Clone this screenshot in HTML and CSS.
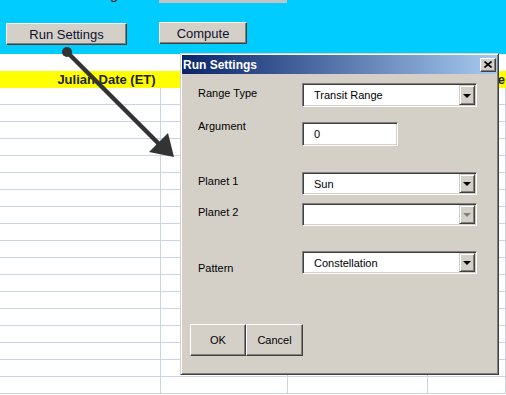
FILE: index.html
```html
<!DOCTYPE html>
<html lang="en">
<head>
  <meta charset="UTF-8">
  <meta name="viewport" content="width=device-width, initial-scale=1.0">
  <title>Run Settings</title>
  <link rel="stylesheet" href="styles.css">
</head>
<body>
  <div class="page">
    <div class="toolbar">
      <div class="top-row">
        <span class="top-label">Time Setting</span>
        <span class="top-field"></span>
      </div>
      <div class="button-row">
        <button class="btn btn-run">Run Settings</button>
        <button class="btn btn-compute">Compute</button>
      </div>
    </div>

    <div class="sheet">
      <div class="header-row">
        <div class="head-cell head-main">Julian Date (ET)</div>
        <div class="head-cell head-side">Longitude</div>
      </div>
      <div id="rows"></div>
    </div>

    <!-- pointer from the button to the dialog -->
    <svg class="pointer" width="506" height="395" viewBox="0 0 506 395">
      <circle cx="67" cy="52" r="5" fill="#333"/>
      <line x1="67" y1="52" x2="161" y2="146" stroke="#333" stroke-width="4.5"/>
      <polygon points="174,157 149,152 168,133" fill="#333"/>
    </svg>

    <div class="dialog">
      <div class="title-bar">
        <span class="title-text">Run Settings</span>
        <span class="close-btn">
          <svg width="8" height="7" viewBox="0 0 8 7">
            <path d="M0.5 0.5 L7.5 6.5 M7.5 0.5 L0.5 6.5" stroke="#000" stroke-width="1.6"/>
          </svg>
        </span>
      </div>
      <div class="dialog-body">
        <div class="field-row row-range">
          <span class="field-label">Range Type</span>
          <div class="combo">
            <span class="combo-text">Transit Range</span>
            <span class="combo-btn"><span class="arrow"></span></span>
          </div>
        </div>
        <div class="field-row row-arg">
          <span class="field-label label-arg">Argument</span>
          <div class="text-box">0</div>
        </div>
        <div class="field-row row-p1">
          <span class="field-label label-p1">Planet 1</span>
          <div class="combo">
            <span class="combo-text">Sun</span>
            <span class="combo-btn"><span class="arrow"></span></span>
          </div>
        </div>
        <div class="field-row row-p2">
          <span class="field-label label-p2">Planet 2</span>
          <div class="combo">
            <span class="combo-text"></span>
            <span class="combo-btn"><span class="arrow disabled"></span></span>
          </div>
        </div>
        <div class="field-row row-pattern">
          <span class="field-label label-pattern">Pattern</span>
          <div class="combo">
            <span class="combo-text">Constellation</span>
            <span class="combo-btn"><span class="arrow"></span></span>
          </div>
        </div>
        <div class="dialog-buttons">
          <button class="dlg-btn btn-ok">OK</button>
          <button class="dlg-btn btn-cancel">Cancel</button>
        </div>
      </div>
    </div>
  </div>

  <script>
    // Empty sheet rows behind the dialog
    const rows = document.getElementById("rows");
    for (let i = 0; i < 18; i++) {
      const row = document.createElement("div");
      row.classList.add("grid-row");
      for (let c = 0; c < 4; c++) {
        const cell = document.createElement("div");
        cell.classList.add("grid-cell");
        row.appendChild(cell);
      }
      rows.appendChild(row);
    }
  </script>
</body>
</html>
```

FILE: styles.css
```css
body {
  margin: 0;
  padding: 0;
  font-family: "Liberation Sans", Arial, sans-serif;
  background: #fff;
}
.page {
  position: relative;
  width: 506px;
  height: 395px;
  overflow: hidden;
}
.toolbar {
  height: 54px;
  background: #00ccff;
}
.top-row {
  display: flex;
  height: 3px;
}
.top-label {
  width: 118px;
  margin-top: -14px;
  font-size: 15px;
  line-height: 15px;
  text-align: right;
  color: #111;
}
.top-field {
  width: 128px;
  height: 3px;
  margin-left: 41px;
  background: #c4c4c4;
}
.button-row {
  display: flex;
  align-items: flex-start;
  margin-top: 19px;
}
.btn {
  height: 22px;
  padding: 0;
  font-family: "Liberation Sans", Arial, sans-serif;
  font-size: 13px;
  color: #101030;
  background: #d4d0c8;
  border: 1px solid;
  border-color: #fff #404040 #404040 #fff;
  box-shadow: inset -1px -1px #808080;
}
.btn-run {
  width: 121px;
  margin-left: 6px;
  margin-top: 1px;
}
.btn-compute {
  width: 88px;
  margin-left: 32px;
}
.sheet {
  padding-top: 17px;
}
.header-row {
  display: flex;
  height: 17px;
  background: #ffff00;
  font-size: 13px;
  font-weight: bold;
  line-height: 17px;
  color: #222;
}
.head-main {
  width: 213px;
  text-align: center;
}
.head-side {
  flex: 1;
  text-align: right;
  padding-right: 1px;
}
.grid-row {
  display: grid;
  grid-template-columns: 161px 127px 140px 1fr;
  height: 17px;
  box-sizing: border-box;
  border-bottom: 1px solid #ccd4e2;
}
.grid-cell {
  border-right: 1px solid #ccd4e2;
}
.pointer {
  position: absolute;
  left: 0;
  top: 0;
  pointer-events: none;
}

/* dialog */
.dialog {
  position: absolute;
  left: 180px;
  top: 53px;
  width: 319px;
  height: 322px;
  box-sizing: border-box;
  padding: 1px;
  background: #d4d0c8;
  border: 1px solid;
  border-color: #d4d0c8 #404040 #404040 #d4d0c8;
  box-shadow: inset 1px 1px #fff, inset -1px -1px #808080;
  font-size: 11px;
  color: #000;
}
.title-bar {
  display: flex;
  align-items: center;
  justify-content: space-between;
  height: 19px;
  padding: 0 1px 0 1px;
  background: linear-gradient(to right, #0a246a, #a6caf0);
}
.title-text {
  font-size: 12px;
  font-weight: bold;
  color: #fff;
}
.close-btn {
  display: flex;
  align-items: center;
  justify-content: center;
  width: 16px;
  height: 14px;
  box-sizing: border-box;
  background: #d4d0c8;
  border: 1px solid;
  border-color: #fff #404040 #404040 #fff;
  box-shadow: inset -1px -1px #808080;
}
.dialog-body {
  padding-left: 16px;
}
.field-row {
  display: flex;
  align-items: flex-start;
}
.field-label {
  width: 104px;
  line-height: 13px;
  margin-top: 4px;
}
.label-arg {
  margin-top: -2px;
}
.label-p1 {
  margin-top: 3px;
}
.label-p2 {
  margin-top: 3px;
}
.label-pattern {
  margin-top: 11px;
}
.row-range {
  margin-top: 9px;
}
.row-arg {
  margin-top: 15px;
}
.row-p1 {
  margin-top: 26px;
}
.row-p2 {
  margin-top: 8px;
}
.row-pattern {
  margin-top: 25px;
}
.combo,
.text-box {
  display: flex;
  align-items: center;
  box-sizing: border-box;
  background: #fff;
  border: 1px solid;
  border-color: #808080 #fff #fff #808080;
  box-shadow: inset 1px 1px #404040, inset -1px -1px #d4d0c8;
  padding: 1px;
}
.combo {
  width: 175px;
  height: 23px;
}
.row-range .combo {
  height: 24px;
}
.text-box {
  width: 96px;
  height: 24px;
  padding-left: 11px;
}
.combo-text {
  flex: 1;
  padding-left: 10px;
}
.combo-btn {
  display: flex;
  align-items: center;
  justify-content: center;
  width: 16px;
  align-self: stretch;
  box-sizing: border-box;
  background: #d4d0c8;
  border: 1px solid;
  border-color: #d4d0c8 #404040 #404040 #d4d0c8;
  box-shadow: inset 1px 1px #fff, inset -1px -1px #808080;
}
.arrow {
  width: 0;
  height: 0;
  border-left: 4px solid transparent;
  border-right: 4px solid transparent;
  border-top: 4px solid #000;
  margin-top: 1px;
}
.arrow.disabled {
  border-top-color: #808080;
}
.dialog-buttons {
  display: flex;
  margin-top: 49px;
  margin-left: -8px;
}
.dlg-btn {
  height: 32px;
  padding: 0;
  font-family: "Liberation Sans", Arial, sans-serif;
  font-size: 11px;
  color: #000;
  background: #d4d0c8;
  border: 1px solid;
  border-color: #fff #404040 #404040 #fff;
  box-shadow: inset -1px -1px #808080;
}
.btn-ok {
  width: 56px;
}
.btn-cancel {
  width: 57px;
}
```
